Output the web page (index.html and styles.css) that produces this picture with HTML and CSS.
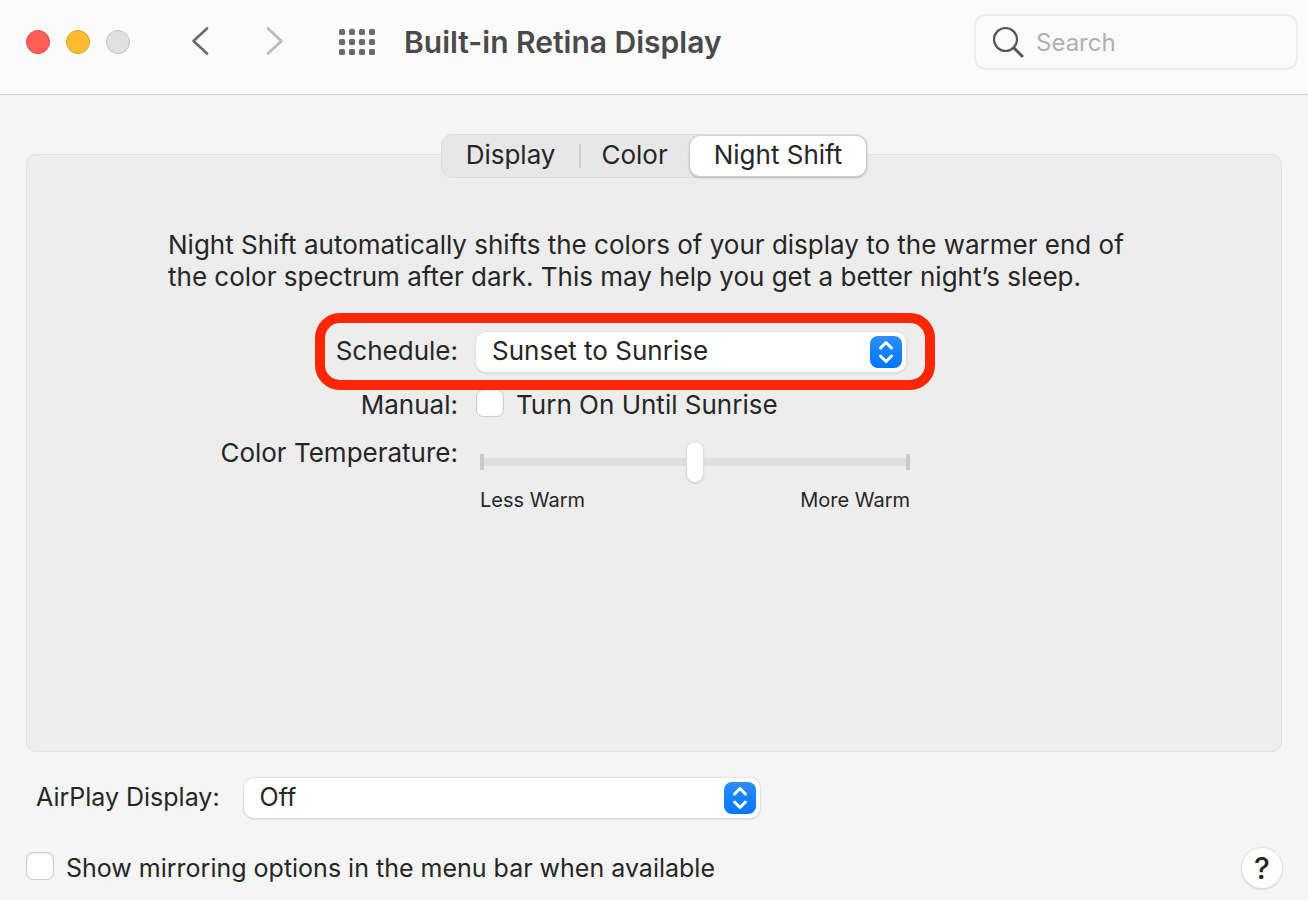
FILE: index.html
```html
<!DOCTYPE html>
<html lang="en">
<head>
<meta charset="utf-8">
<title>Built-in Retina Display</title>
<link rel="stylesheet" href="styles.css">
</head>
<body>
<header class="toolbar">
  <div class="lights">
    <button class="light light-close" aria-label="Close"></button>
    <button class="light light-minimize" aria-label="Minimize"></button>
    <button class="light light-zoom" aria-label="Zoom" disabled></button>
  </div>
  <nav class="history" aria-label="History">
    <button class="icon-button" aria-label="Back">
      <svg width="20" height="32" viewBox="0 0 20 32"><path d="M17 2.500 3.500 15 17 27.500" fill="none" stroke="#6b6b6b" stroke-width="2.600" stroke-linecap="round" stroke-linejoin="round"/></svg>
    </button>
    <button class="icon-button" aria-label="Forward">
      <svg width="20" height="32" viewBox="0 0 20 32"><path d="M3 2.500 16.500 15 3 27.500" fill="none" stroke="#bababa" stroke-width="2.600" stroke-linecap="round" stroke-linejoin="round"/></svg>
    </button>
  </nav>
  <button class="icon-button" aria-label="Show all">
    <svg width="36" height="26" viewBox="0 0 36 26" fill="#6b6b6b">
      <rect x="0" y="0" width="6" height="6" rx="1.500"/><rect x="10" y="0" width="6" height="6" rx="1.500"/><rect x="20" y="0" width="6" height="6" rx="1.500"/><rect x="30" y="0" width="6" height="6" rx="1.500"/>
      <rect x="0" y="10" width="6" height="6" rx="1.500"/><rect x="10" y="10" width="6" height="6" rx="1.500"/><rect x="20" y="10" width="6" height="6" rx="1.500"/><rect x="30" y="10" width="6" height="6" rx="1.500"/>
      <rect x="0" y="20" width="6" height="6" rx="1.500"/><rect x="10" y="20" width="6" height="6" rx="1.500"/><rect x="20" y="20" width="6" height="6" rx="1.500"/><rect x="30" y="20" width="6" height="6" rx="1.500"/>
    </svg>
  </button>
  <h1 class="title">Built-in Retina Display</h1>
  <label class="search">
    <svg width="32" height="32" viewBox="0 0 32 32" fill="none" stroke="#555"><circle cx="13.500" cy="13.500" r="11.500" stroke-width="2.200"/><path d="M22 22 30 30" stroke-width="3" stroke-linecap="round"/></svg>
    <input class="search-input" type="text" placeholder="Search" aria-label="Search">
  </label>
</header>

<main class="content">
  <div class="tabs" role="tablist">
    <button class="tab" role="tab" aria-selected="false">Display</button>
    <button class="tab tab-second" role="tab" aria-selected="false">Color</button>
    <button class="tab tab-active" role="tab" aria-selected="true">Night Shift</button>
  </div>
  <section class="panel">
    <p class="description">Night Shift automatically shifts the colors of your display to the warmer end of<br>the color spectrum after dark. This may help you get a better night’s sleep.</p>
    <div class="row row-schedule">
      <label class="row-label" for="schedule">Schedule:</label>
      <div class="popup">
        <select id="schedule" class="popup-select"><option>Sunset to Sunrise</option></select>
        <svg class="popup-arrows" width="32" height="32" viewBox="0 0 32 32"><path d="M10.500 12 16 6.500l5.500 5.500M10.500 20 16 25.500l5.500-5.500" fill="none" stroke="#fff" stroke-width="3" stroke-linecap="round" stroke-linejoin="round"/></svg>
      </div>
    </div>
    <div class="row">
      <span class="row-label">Manual:</span>
      <label class="check"><input class="check-box" type="checkbox">Turn On Until Sunrise</label>
    </div>
    <div class="row">
      <label class="row-label" for="temperature">Color Temperature:</label>
      <div class="slider">
        <input id="temperature" class="slider-input" type="range" min="0" max="100" value="50">
        <div class="slider-legend"><span>Less Warm</span><span>More Warm</span></div>
      </div>
    </div>
  </section>
</main>

<footer class="footer">
  <div class="airplay">
    <label for="airplay">AirPlay Display:</label>
    <div class="popup popup-airplay">
      <select id="airplay" class="popup-select"><option>Off</option></select>
      <svg class="popup-arrows" width="32" height="32" viewBox="0 0 32 32"><path d="M10.500 12 16 6.500l5.500 5.500M10.500 20 16 25.500l5.500-5.500" fill="none" stroke="#fff" stroke-width="3" stroke-linecap="round" stroke-linejoin="round"/></svg>
    </div>
  </div>
  <div class="mirroring">
    <label class="check"><input class="check-box" type="checkbox">Show mirroring options in the menu bar when available</label>
    <button class="help" aria-label="Help">?</button>
  </div>
</footer>
</body>
</html>
```
FILE: styles.css
```css
* {
  box-sizing: border-box;
}

body {
  margin: 0;
  min-height: 100vh;
  display: flex;
  flex-direction: column;
  background: #f5f5f5;
  color: #262626;
  font-family: Inter, "Liberation Sans", sans-serif;
  font-size: 26px;
  line-height: 32px;
}

button,
input,
select {
  font: inherit;
  color: inherit;
  margin: 0;
}

.toolbar {
  display: flex;
  align-items: center;
  height: 95px;
  padding: 0 10px 10px 26px;
  background: #fbfbfb;
  border-bottom: 1px solid #cecece;
}

.lights {
  display: flex;
  gap: 16px;
}

.light {
  width: 24px;
  height: 24px;
  padding: 0;
  border: 1px solid;
  border-radius: 50%;
}

.light-close {
  background: #ff5f57;
  border-color: #e2463f;
}

.light-minimize {
  background: #febc2e;
  border-color: #dfa023;
}

.light-zoom {
  background: #e1e1e1;
  border-color: #c3c3c3;
}

.history {
  display: flex;
  gap: 55px;
  margin: 0 54px 0 60px;
}

.icon-button {
  display: flex;
  padding: 0;
  border: 0;
  background: none;
}

.title {
  margin: 0 0 0 29px;
  font-size: 30px;
  font-weight: 600;
  color: #4a4a4a;
}

.search {
  display: flex;
  align-items: center;
  gap: 12px;
  width: 324px;
  height: 56px;
  margin-left: auto;
  padding: 0 16px;
  border: 2px solid #ececec;
  border-radius: 12px;
}

.search-input {
  flex: 1;
  min-width: 0;
  padding: 2px 0 0;
  border: 0;
  outline: 0;
  background: none;
  font-size: 24px;
}

.search-input::placeholder {
  color: #b0b0b0;
  opacity: 1;
}

.content {
  flex: 1;
  display: flex;
  flex-direction: column;
  padding: 39px 26px 0;
}

.tabs {
  z-index: 1;
  display: flex;
  align-self: center;
  height: 44px;
  margin-bottom: -24px;
  background: #e7e7e7;
  border: 1px solid #dcdcdc;
  border-radius: 11px;
}

.tab {
  padding: 0 24px 2px;
  border: 0;
  background: none;
}

.tab-second {
  padding: 0 22px 2px;
  background: linear-gradient(#d0d0d0, #d0d0d0) left center / 2px 24px no-repeat;
}

.tab-active {
  margin: 1px 0;
  background: #fff;
  border-radius: 10px;
  box-shadow: 0 0 1px 1px #d0d0d0, 0 1px 2px 1px #b4b4b4;
}

.panel {
  flex: 1;
  padding: 74px 141px;
  background: #ededed;
  border: 1px solid #e1e1e1;
  border-radius: 10px;
}

.description {
  margin: 0 0 39px;
}

.row {
  display: flex;
  gap: 18px;
  margin-top: 16px;
}

.row-label {
  width: 290px;
  text-align: right;
}

.row-schedule {
  position: relative;
  width: 738px;
  padding-bottom: 1px;
}

.row-schedule .row-label {
  padding-top: 3px;
}

.row-schedule::after {
  content: "";
  position: absolute;
  inset: -19px -29px -17px 147px;
  border: 10px solid #ff2600;
  border-radius: 25px;
  pointer-events: none;
}

.popup {
  position: relative;
  flex: 1;
}

.popup-select {
  display: block;
  width: 100%;
  height: 40px;
  padding: 0 48px 2px 16px;
  appearance: none;
  border: 0;
  border-radius: 10px;
  background: #fff;
  box-shadow: 0 0 1px 1px #e2e2e2, 0 1px 2px #b0b0b0;
}

.popup-arrows {
  position: absolute;
  top: 4px;
  right: 4px;
  border-radius: 8px;
  background: linear-gradient(#2d8eff, #0077ff);
  pointer-events: none;
}

.check {
  display: flex;
  gap: 12px;
}

.check-box {
  width: 28px;
  height: 28px;
  appearance: none;
  border: 1px solid #cdcdcd;
  border-radius: 7px;
  background: #fff;
  box-shadow: inset 0 1px 3px #e6e6e6;
}

.slider {
  width: 430px;
  margin-left: 4px;
}

.slider-input {
  display: block;
  width: 100%;
  height: 40px;
  margin: 5px 0 2px;
  appearance: none;
  background:
    linear-gradient(#c9c9c9, #c9c9c9) left center / 4px 16px no-repeat,
    linear-gradient(#c9c9c9, #c9c9c9) right center / 4px 16px no-repeat,
    linear-gradient(#dedede, #dedede) center / 100% 8px no-repeat;
}

.slider-input::-webkit-slider-thumb {
  width: 16px;
  height: 40px;
  appearance: none;
  border-radius: 8px;
  background: #fff;
  box-shadow: 0 0 1px 1px #dcdcdc, 0 1px 2px #aaa;
}

.slider-legend {
  display: flex;
  justify-content: space-between;
  font-size: 20px;
}

.footer {
  padding: 26px 26px 12px;
  font-size: 25px;
}

.airplay {
  display: flex;
  gap: 24px;
  padding-left: 10px;
}

.airplay label {
  padding-top: 3px;
}

.popup-airplay {
  flex: none;
  width: 516px;
}

.mirroring {
  display: flex;
  align-items: center;
  justify-content: space-between;
  margin-top: 30px;
}

.help {
  width: 40px;
  height: 40px;
  padding: 0;
  border: 0;
  border-radius: 50%;
  background: #fff;
  box-shadow: 0 0 1px 1px #e2e2e2, 0 1px 2px #b0b0b0;
  font-size: 30px;
  font-weight: 500;
}
```
